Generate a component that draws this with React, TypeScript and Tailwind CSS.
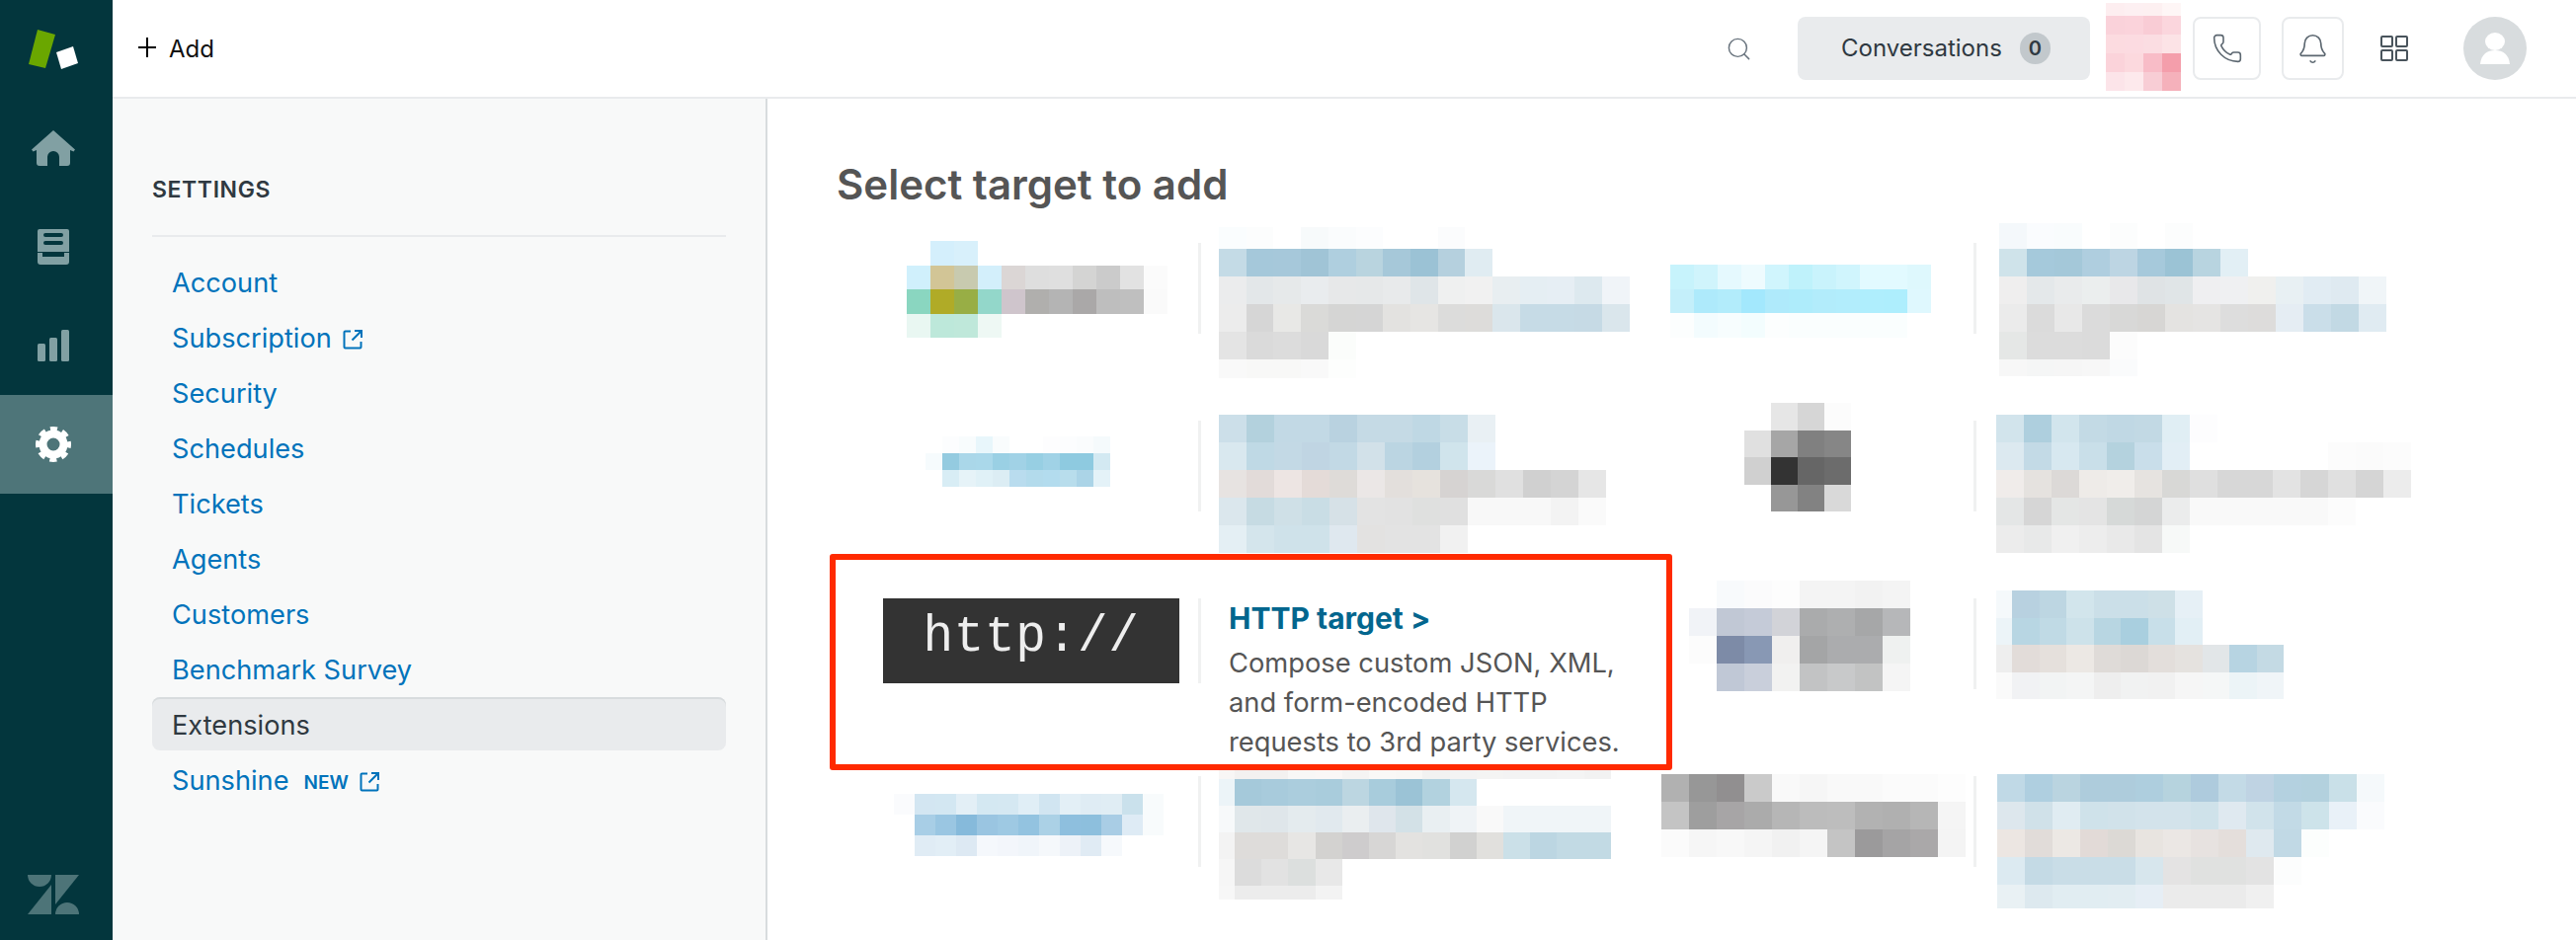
import React from "react";
import { Bell, Phone, Search } from "lucide-react";

const navItems = [
  "Account",
  "Subscription",
  "Security",
  "Schedules",
  "Tickets",
  "Agents",
  "Customers",
  "Benchmark Survey",
];

interface MosaicProps {
  rows: string[];
  w: number;
  h: number;
  topH?: number;
  botH?: number;
  firstW?: number;
  className?: string;
}

// blurred-out logos and text: rows of hex cells, "-" leaves a cell empty
const Mosaic: React.FC<MosaicProps> = ({ rows, w, h, topH, botH, firstW, className }) => {
  const cells = rows.map((r) => r.split(" "));
  const heights = rows.map((_, i) => {
    if (i === 0 && topH) return topH;
    if (i === rows.length - 1 && botH) return botH;
    return h;
  });
  const first = firstW ?? w;
  const width = first + (Math.max(...cells.map((c) => c.length)) - 1) * w;
  const height = heights.reduce((a, b) => a + b, 0);
  let y = 0;
  return (
    <svg width={width} height={height} shapeRendering="crispEdges" className={`shrink-0 ${className ?? ""}`}>
      {cells.map((row, i) => {
        const top = y;
        y += heights[i];
        return row.map((c, j) =>
          c === "-" ? null : (
            <rect
              key={`${i}-${j}`}
              x={j === 0 ? 0 : first + (j - 1) * w}
              y={top}
              width={j === 0 ? first : w}
              height={heights[i]}
              fill={`#${c}`}
            />
          )
        );
      })}
    </svg>
  );
};

const ExternalIcon = () => (
  <svg width="20" height="20" viewBox="0 0 20 20" fill="none" stroke="#0073bb" strokeWidth="2">
    <path d="M8 1.5H2.5a1 1 0 0 0-1 1v15a1 1 0 0 0 1 1h15a1 1 0 0 0 1-1V12" />
    <path d="M12 1h7v7M18.5 1.5 9.5 10.5" />
  </svg>
);

const Card: React.FC<{ logoW: string; logo: React.ReactNode; sepH?: string; children: React.ReactNode }> = ({
  logoW,
  logo,
  sepH = "h-[92px]",
  children,
}) => (
  <div className="flex h-[180px]">
    <div className={`shrink-0 ${logoW}`}>{logo}</div>
    <div className={`w-[3px] mt-[26px] shrink-0 bg-[#f0f1f1] ${sepH}`} />
    {children}
  </div>
);

export default function App() {
  return (
    <div className="flex h-[952px] overflow-hidden bg-white font-['Inter',sans-serif]">
      {/* Product rail */}
      <aside className="w-[114px] shrink-0 bg-[#03363d] flex flex-col items-center">
        <svg width="114" height="100" className="shrink-0">
          <polygon points="38,30 56,35 46,69 29,65" fill="#6aa700" />
          <polygon points="57,53 74,47 79,64 62,70" fill="#ffffff" />
        </svg>
        <div className="w-full h-[100px] pr-[6px] flex items-center justify-center">
          <svg width="44" height="36" viewBox="0 0 44 36" fill="#81a0a3">
            <path d="M22 0 44 19.5 42.5 21.5 39 20V33a3 3 0 0 1-3 3H28V27a6 6 0 0 0-12 0v9H8a3 3 0 0 1-3-3V20L1.5 21.5 0 19.5Z" />
          </svg>
        </div>
        <div className="w-full h-[100px] pr-[6px] flex items-center justify-center">
          <svg width="32" height="36" viewBox="0 0 32 36" fill="#81a0a3">
            <path fillRule="evenodd" d="M2 0H30a2 2 0 0 1 2 2V23H0V2A2 2 0 0 1 2 0ZM8 4a2 2 0 0 0 0 4H24a2 2 0 0 0 0-4ZM8 12a2 2 0 0 0 0 4H24a2 2 0 0 0 0-4Z" />
            <path d="M0 24H5V28H27V24H32V33a3 3 0 0 1-3 3H3a3 3 0 0 1-3-3Z" />
          </svg>
        </div>
        <div className="w-full h-[100px] pr-[6px] flex items-center justify-center">
          <svg width="32" height="32" viewBox="0 0 32 32" fill="#81a0a3">
            <rect x="0" y="14" width="8" height="18" rx="1.5" />
            <rect x="12" y="8" width="8" height="24" rx="1.5" />
            <rect x="24" y="0" width="8" height="32" rx="1.5" />
          </svg>
        </div>
        <div className="w-full h-[100px] pr-[6px] flex items-center justify-center bg-[#4e7579]">
          <svg width="36" height="36" viewBox="0 0 36 36" fill="none" stroke="#ffffff">
            <circle cx="18" cy="18" r="10.5" strokeWidth="8" />
            <circle cx="18" cy="18" r="15.5" strokeWidth="5" strokeDasharray="7 5.17" strokeDashoffset="3.5" />
          </svg>
        </div>
        <div className="mt-auto mb-[26px] mr-[6px]">
          <svg width="52" height="40" viewBox="0 0 52 40" fill="#4d7478">
            <path d="M0 0H24A12 12 0 0 1 0 0Z" />
            <path d="M24 10V40H0Z" />
            <path d="M28 0H52L28 30Z" />
            <path d="M28 40A12 12 0 0 1 52 40Z" />
          </svg>
        </div>
      </aside>

      <div className="flex-1 min-w-0 flex flex-col">
        {/* Top bar */}
        <header className="h-[100px] shrink-0 border-b-2 border-[#e9ebed] flex items-center pl-[26px] pr-[50px]">
          <svg width="18" height="20" viewBox="0 0 18 20" stroke="#000000" strokeWidth="2" className="mb-[2px]">
            <path d="M9 0V20M0 10H18" />
          </svg>
          <span className="ml-[13px] text-[24px] text-[#111111] pt-[1px]">Add</span>
          <Search size={27} strokeWidth={1.3} className="ml-auto text-[#68737d]" />
          <button className="ml-[46px] w-[296px] h-[64px] rounded-lg bg-[#e9ebed] flex items-center pl-[44px] text-[24px] text-[#2f3941]">
            Conversations
            <span className="ml-[18px] w-[31px] h-[32px] rounded-full bg-[#c2c8cc] flex items-center justify-center text-[20px] font-semibold">
              0
            </span>
          </button>
          <div className="ml-[16px] w-[76px] h-[89px] flex flex-col mb-[3px]">
            <Mosaic
              w={19}
              h={19}
              topH={13}
              rows={[
                "fdeef0 fdf0f2 fdf0f1 fef6f6",
                "fad2da fbd3db f9ccd5 fbd6dd",
                "fcdbe0 fcdbe1 fbdde2 fce3e6",
                "fbd3da fcd9de f8bcc7 f49eab",
                "fce4e9 fde9ec f8cdd5 f5b1bb",
              ]}
            />
          </div>
          <button className="ml-[12px] w-[69px] h-[64px] rounded-lg border-2 border-[#e9ebed] flex items-center justify-center">
            <Phone size={32} strokeWidth={1.2} className="text-[#5c6770]" />
          </button>
          <button className="ml-[21px] w-[63px] h-[64px] rounded-lg border-2 border-[#e9ebed] flex items-center justify-center">
            <Bell size={33} strokeWidth={1.2} className="text-[#5c6770]" />
          </button>
          <svg width="28" height="26" viewBox="0 0 28 26" fill="none" stroke="#49545c" strokeWidth="2" className="ml-[37px]">
            <rect x="1" y="1" width="11" height="10" rx="1" />
            <rect x="16" y="1" width="11" height="10" rx="1" />
            <rect x="1" y="15" width="11" height="10" rx="1" />
            <rect x="16" y="15" width="11" height="10" rx="1" />
          </svg>
          <div className="ml-[56px] w-[64px] h-[64px] rounded-full bg-[#d8dcde] flex items-center justify-center">
            <svg width="30" height="32" viewBox="0 0 30 32" fill="#ffffff">
              <ellipse cx="15" cy="9" rx="10" ry="9" />
              <path d="M15 18C23 18 29 22 30 32H0C1 22 7 18 15 18Z" />
            </svg>
          </div>
        </header>

        <div className="flex-1 min-h-0 flex">
          {/* Settings nav */}
          <nav className="w-[663px] shrink-0 bg-[#f8f9f9] border-r-2 border-[#d8dcde] pl-[40px] pr-[40px] pt-[77px]">
            <h2 className="text-[23px] leading-[30px] font-semibold tracking-[0.6px] text-[#2f3941]">SETTINGS</h2>
            <div className="mt-[31px] mb-[18px] h-[2px] bg-[#e9ebed]" />
            <ul className="flex flex-col">
              {navItems.map((item) => (
                <li key={item} className="h-[54px] mb-[2px] pl-[20px] pt-[5px] flex items-center text-[27.2px] text-[#0073bb]">
                  {item}
                  {item === "Subscription" && (
                    <span className="ml-[11px]">
                      <ExternalIcon />
                    </span>
                  )}
                </li>
              ))}
              <li className="h-[54px] mb-[2px] pl-[20px] pt-[5px] flex items-center rounded-lg bg-[#e9ebed] shadow-[inset_0_2px_0_#d8dcde] text-[27.2px] text-[#2f3941]">
                Extensions
              </li>
              <li className="h-[54px] pl-[20px] pt-[5px] flex items-center text-[27.2px] text-[#0073bb]">
                Sunshine
                <span className="ml-[15px] text-[19px] font-semibold mt-[3px]">NEW</span>
                <span className="ml-[11px]">
                  <ExternalIcon />
                </span>
              </li>
            </ul>
          </nav>

          {/* Target chooser */}
          <main className="relative flex-1 min-w-0 pl-[72px]">
            <h1 className="h-[120px] pt-[63px] -ml-[2px] text-[42px] leading-[48px] font-semibold text-[#555555]">
              Select target to add
            </h1>

            <div className="grid grid-cols-[789px_1fr]">
              <Card
                logoW="w-[364px]"
                logo={
                  <Mosaic
                    className="ml-[69px] mt-[24px]"
                    w={24}
                    h={24.5}
                    rows={[
                      "- d4effc d8f0fb - - - - - - -",
                      "d0f0fc d2c596 c8caaf d3effb dbd6d5 dedede dfdfdf d4d4d3 cbcbcb e2e2e2 fbfbfb",
                      "8ad6c0 b0ab27 98ae45 93d7ca cfc5cc b0afad b4b4b4 aaa8a8 bebebe bfbfbf fafafa",
                      "e9f7f2 bde8da bfe8da eef8f4",
                    ]}
                  />
                }
              >
                <Mosaic
                  className="ml-[18px] mt-[10px]"
                  w={27.7}
                  h={28}
                  topH={22}
                  botH={19}
                  rows={[
                    "fafdfe fcfdfd - f7fafb fafcfd fcfdfe - - fbfcfd",
                    "c4dbe6 a5c8da a6c8da a0c4d6 afcfdf b9d4df a6c8d9 9bc2d5 b5d0de e0ecf2",
                    "ebeced e3e7e9 e6e9ea e9ecee e7e8e9 e6e8e9 e8eaeb dfe5e8 eff0f0 f1f1f1 e8eef1 e5eef3 e6eef4 dde9ef f0f4f8",
                    "ececec d6d6d6 e8e8e6 dadad8 d5d5d4 d5d5d5 e3e2e0 e6e5e3 dcdcdb dddcda dae6ec c6dbe6 c6dbe6 c6dae5 dae6ec",
                    "e4e4e4 dadada dcdcdc d9d9d9 fbfdfb",
                    "f9f9f9 f8f8f7 f8f8f7 f9f9f9 fdfefd",
                  ]}
                />
              </Card>

              <Card
                logoW="w-[360px]"
                logo={
                  <Mosaic
                    className="ml-[53px] mt-[48px]"
                    w={24}
                    h={24.5}
                    rows={[
                      "c7f3fc d0f4fc e5f9fe eefbfe d0f5fd bff2fb c9f3fc d0f5fd e2faff e2faff def8fd",
                      "c4effa aeeafb b2ecfb a3e8fd afeafb aeecfb b2ecfb b2edfc afeefd aeeefd dff8fe",
                      "fcfefe f3fcfe f7fdfe f3fdfe fcfefe fafefe fafefe fafefe fafefe fafefe -",
                    ]}
                  />
                }
              >
                <Mosaic
                  className="ml-[23px] mt-[6px]"
                  w={28}
                  h={28}
                  topH={26}
                  botH={17}
                  rows={[
                    "f4f8fb fafcfe f9fcfd - fcfdfd - fcfdfd",
                    "cfe3ea a5c9db a4c8d9 afcedf bdd5e3 a6c9db 9bc3d5 b8d4e0 e2eff5",
                    "efeeee e4e8ea e9ebec ebeeee e8e8ea dfe3e5 e0e5e7 efeff1 eff0f2 f0f0ee e8f0f3 e1ecf3 dfeaf1 f0f5f8",
                    "ebebeb dbdbdb e8e8e8 dbdbdb d8d8d7 d7d6d4 e4e3e1 e5e4e3 dddddd dddcdb e5edf3 cadee9 c2d9e4 e0ebf2",
                    "e5e7e6 dcdcdc dcdcdc dbdbdb fcfcfc",
                    "f7f7f7 f5f6f6 f6f6f6 f7f7f7 fafbfc",
                  ]}
                />
              </Card>

              <Card
                logoW="w-[364px]"
                logo={
                  <Mosaic
                    className="ml-[88px] mt-[42px]"
                    w={17}
                    h={17}
                    rows={[
                      "- fcfdfe f8fcfd e8f6fb f9fcfd - - fdfdfe fcfdfe fafcfd f5fafc",
                      "f6fbfd 94cbe0 aad7e9 aad8ea 9ad0e4 a1d2e6 97cfe3 a0d2e6 8ecae0 8ecae0 d3e9f2",
                      "- d8edf5 e6f3f8 e0f1f7 dcedf4 b9dcee b3dbec b3dcee b8ddec abd4e7 e4f2f8",
                    ]}
                  />
                }
              >
                <Mosaic
                  className="ml-[18px] mt-[20px]"
                  w={28}
                  h={28}
                  rows={[
                    "ccdfe9 b3d1dd c2d9e5 c2d9e5 b9d2e0 c5dae5 c5dae5 bfd8e4 c8dde7 e9f0f4",
                    "d9e8ef bfd9e5 c3d9e5 c0d5e3 c2d9e5 d2e1e9 bbd5e2 b3d0df d0e4ec ebf3fa",
                    "e7e3e1 e2dbd9 ede5e3 e4dbd8 dedbd8 ebe7e6 e3dfdc e6e2dd d6d3d2 d9d9d8 e0e0e0 d0d0d0 d4d4d4 e6e6e6",
                    "dbe7ed c6dbe3 cfe0e7 c9dde5 d6e1e7 e3e3e3 e2e2e2 dfe0df e0e0e0 f8f8f8 f8f8f8 f8f8f8 f3f3f3 fafafa",
                    "e4eff4 d4e5ec cfe2ea cfe2ea dfe8ef e3e2e1 e3e3e3 e3e3e3 f1f1f1",
                  ]}
                />
              </Card>

              <Card
                logoW="w-[360px]"
                logo={
                  <Mosaic
                    className="ml-[128px] mt-[8px]"
                    w={27}
                    h={27.5}
                    rows={[
                      "- e6e6e6 d6d6d6 fcfcfc",
                      "e0e0e0 a6a6a6 808080 868686",
                      "d0d0d0 333333 666666 6c6c6c",
                      "- 979797 828282 d9d9d9",
                    ]}
                  />
                }
              >
                <Mosaic
                  className="ml-[20px] mt-[20px]"
                  w={28}
                  h={28}
                  rows={[
                    "d2e4ec aecfde d2e5ed c3dae5 c0d8e4 c2d9e4 e0eef4 fdfdfe",
                    "dce9f0 c3dae6 d7e8f0 c9dfe9 b4d2de c9deea e2eef5 - - - - - fcfcfc fbfbfb fcfcfc",
                    "f0ecea e5e2df dcd9d7 eeebe8 f0edea e6e3e0 d8d8d6 dfdfdf d7d7d7 d7d7d7 e3e3e3 d6d6d6 e0e0e0 d5d5d5 ececec",
                    "e4e6e6 d6d6d6 e4e6e5 e4e4e4 d6d9d8 d4d5d5 ebecec f9f9f9 f9f9f9 f9f9f9 f9f9f9 f9f9f9 fcfcfc",
                    "ececec e8e9e9 f0f0f0 ededed e9e9e9 e4e4e4 f7f9f8",
                  ]}
                />
              </Card>

              <Card
                logoW="w-[364px]"
                sepH="h-[86px]"
                logo={
                  <div className="ml-[45px] mt-[26px] w-[300px] h-[86px] bg-[#333333] flex items-center justify-center pb-[6px] font-['Liberation_Mono',monospace] text-[51px] tracking-[0.7px] text-[#eeeeee]">
                    http://
                  </div>
                }
              >
                <div className="ml-[28px] mt-[26px]">
                  <h3 className="text-[30px] leading-[40px] font-bold text-[#03668e] mb-[6px]">HTTP target &gt;</h3>
                  <p className="text-[27.3px] leading-[40px] text-[#555555] whitespace-nowrap">
                    Compose custom JSON, XML,
                    <br />
                    and form-encoded HTTP
                    <br />
                    requests to 3rd party services.
                  </p>
                </div>
              </Card>

              <Card
                logoW="w-[360px]"
                logo={
                  <Mosaic
                    className="ml-[72px] mt-[8px]"
                    w={28}
                    h={28}
                    rows={[
                      "- f8fafc fbfbfc fdfdfd f4f4f4 f4f4f4 f2f2f2 f4f4f4",
                      "f1f3f7 c1c8d5 c5cbd8 d2d3d8 aaabac aeafb0 a6a7a8 b6b7b9",
                      "fcfcfc 7d8ba7 8898b4 f0efee a4a5a6 abacae abacae eff1f0",
                      "- c0c8d6 c9cfdb f2f2f1 c2c3c4 c8c9ca c2c3c3 f5f5f5",
                    ]}
                  />
                }
              >
                <Mosaic
                  className="ml-[20px] mt-[18px]"
                  w={27.5}
                  h={27.5}
                  firstW={16}
                  rows={[
                    "f5f9fb b8d1e0 bdd6e2 d2e5ec cbdfe8 cbdfe8 cee0e7 e6f0f6",
                    "ecf4f8 b8d6e3 c0dae5 cde2ea b8d6e2 a9cfdf c8dfe9 e2eff5",
                    "eeeeee e2dcd9 e5e0dc ece8e4 dfdbd8 dcd8d5 e3dedb e5e2df e2e6e8 b7d4e2 c4dae4",
                    "fafafa f1f2f4 f2f4f4 f4f5f5 eeeeee f1f2f2 f1f1f1 f6f6f6 f5f7f7 ecf4f7 f0f5f8",
                  ]}
                />
              </Card>

              <Card
                logoW="w-[364px]"
                logo={
                  <Mosaic
                    className="ml-[56px] mt-[44px]"
                    w={21}
                    h={21}
                    rows={[
                      "fafbfd d3e6f2 d3e7f2 e3eff6 d4e8f2 d5e8f2 e0eef6 d1e5f1 e3eff6 dfecf4 e0edf4 cae1ec f8fbfc",
                      "- a8cee6 9ac6e2 86badb 9ac5e1 9ec9e3 93c3e0 abd1e6 8ebfde 8dbfdd a9cde5 deebf5 f8fbfc",
                      "- e0ecf5 e2eef6 dde9f3 f5f8fc f3f6fb f0f5fa f5f8fb edf2f8 e0ebf4 f6f9fc",
                    ]}
                  />
                }
              >
                <Mosaic
                  className="ml-[18px] mt-[20px]"
                  w={27.2}
                  h={27}
                  topH={9}
                  botH={14}
                  firstW={16}
                  rows={[
                    "f8f6f5 f3f1f0 f3f1f0 f8f7f6 faf7f6 f5f4f3 f9f8f6 f8f7f5 f2f2f1 f3f3f3 f4f4f3 f3f3f3 f3f3f3 f4f4f4 f2f2f2",
                    "ecf4f8 a5c9da a8cbdc abcddd a9ccdc bcd6e1 a8ccdc 9bc3d6 b2d2df d5e7ef",
                    "f7f9fa e0e7ea dfe6ea e4ebee e1e9ee eaeef0 dfe6ec d3e1e7 e9eff2 eff3f6 f9f9f9 f0f5f8 f0f5f8 f0f5f8 f0f5f8",
                    "f3f3f3 dedcda dedcda e7e6e4 d3d2d0 cecccd d7d6d5 e3e2e0 e1e1df d1d1d0 e1e0dd cbe0e8 bcd6e2 c2dae4 c2dae4",
                    "f6f6f6 dcdcdc e2e2e2 dcdfde e8e8e8",
                    "f7f7f7 ececec ececec ececec f3f3f3",
                  ]}
                />
              </Card>

              <Card
                logoW="w-[360px]"
                logo={
                  <Mosaic
                    className="ml-[44px] mt-[24px]"
                    w={28}
                    h={28}
                    rows={[
                      "b1b1b1 979797 918f90 cacaca f9f9f9 f6f6f6 f9f9f9 f9f9f9 fbfbfb fbfbfb fdfdfd",
                      "c4c4c4 9e9e9e a7a5a6 ababab b6b6b6 bcbcbc bdbdbd b2b2b2 b0b0b0 b6b6b6 f5f5f5",
                      "fbfbfb f6f6f6 f8f8f8 f5f5f5 f1f1f1 f5f5f5 c4c4c4 9b9a9b a5a4a5 aaa8a9 f4f4f4",
                    ]}
                  />
                }
              >
                <Mosaic
                  className="ml-[21px] mt-[24px]"
                  w={28}
                  h={28}
                  botH={24}
                  rows={[
                    "c0d9e6 afcfe0 bad4e0 aeccdc aeccdc aecede b6d3de aecbdd c3dae6 bfd3e3 b4d1e0 b3d1de c9e0e8 f5f9fb",
                    "dde7ed d0e1e9 e0ecf2 cfe2ea d1e2ea d3e3eb d3e3eb cfe2ea dfe9f0 d1e3eb c2dae6 cde3ea e9f1f8 fafbfd",
                    "ece6e2 e1dcd9 ece8e4 e2dad7 dcd9d5 e8e4e0 ebe7e4 e7e2e0 e4dedb dfe9ef c1d9e5 fcfefd",
                    "dceaf1 c4dae5 c9dde7 c9dde7 c9dde7 d7e6ed e4e3e3 e0e1e0 e0e1e0 e3e3e3 fcfdfd",
                    "e9f1f4 dde9ef e1edf2 e1edf2 e2edf2 e6eef5 ebebeb ebebeb ebebeb f0f0f0",
                  ]}
                />
              </Card>
            </div>

            {/* annotation around the HTTP target */}
            <div className="absolute left-[63px] top-[461px] w-[853px] h-[219px] rounded-[3px] border-[6px] border-[#ff2a00] pointer-events-none" />
          </main>
        </div>
      </div>
    </div>
  );
}
